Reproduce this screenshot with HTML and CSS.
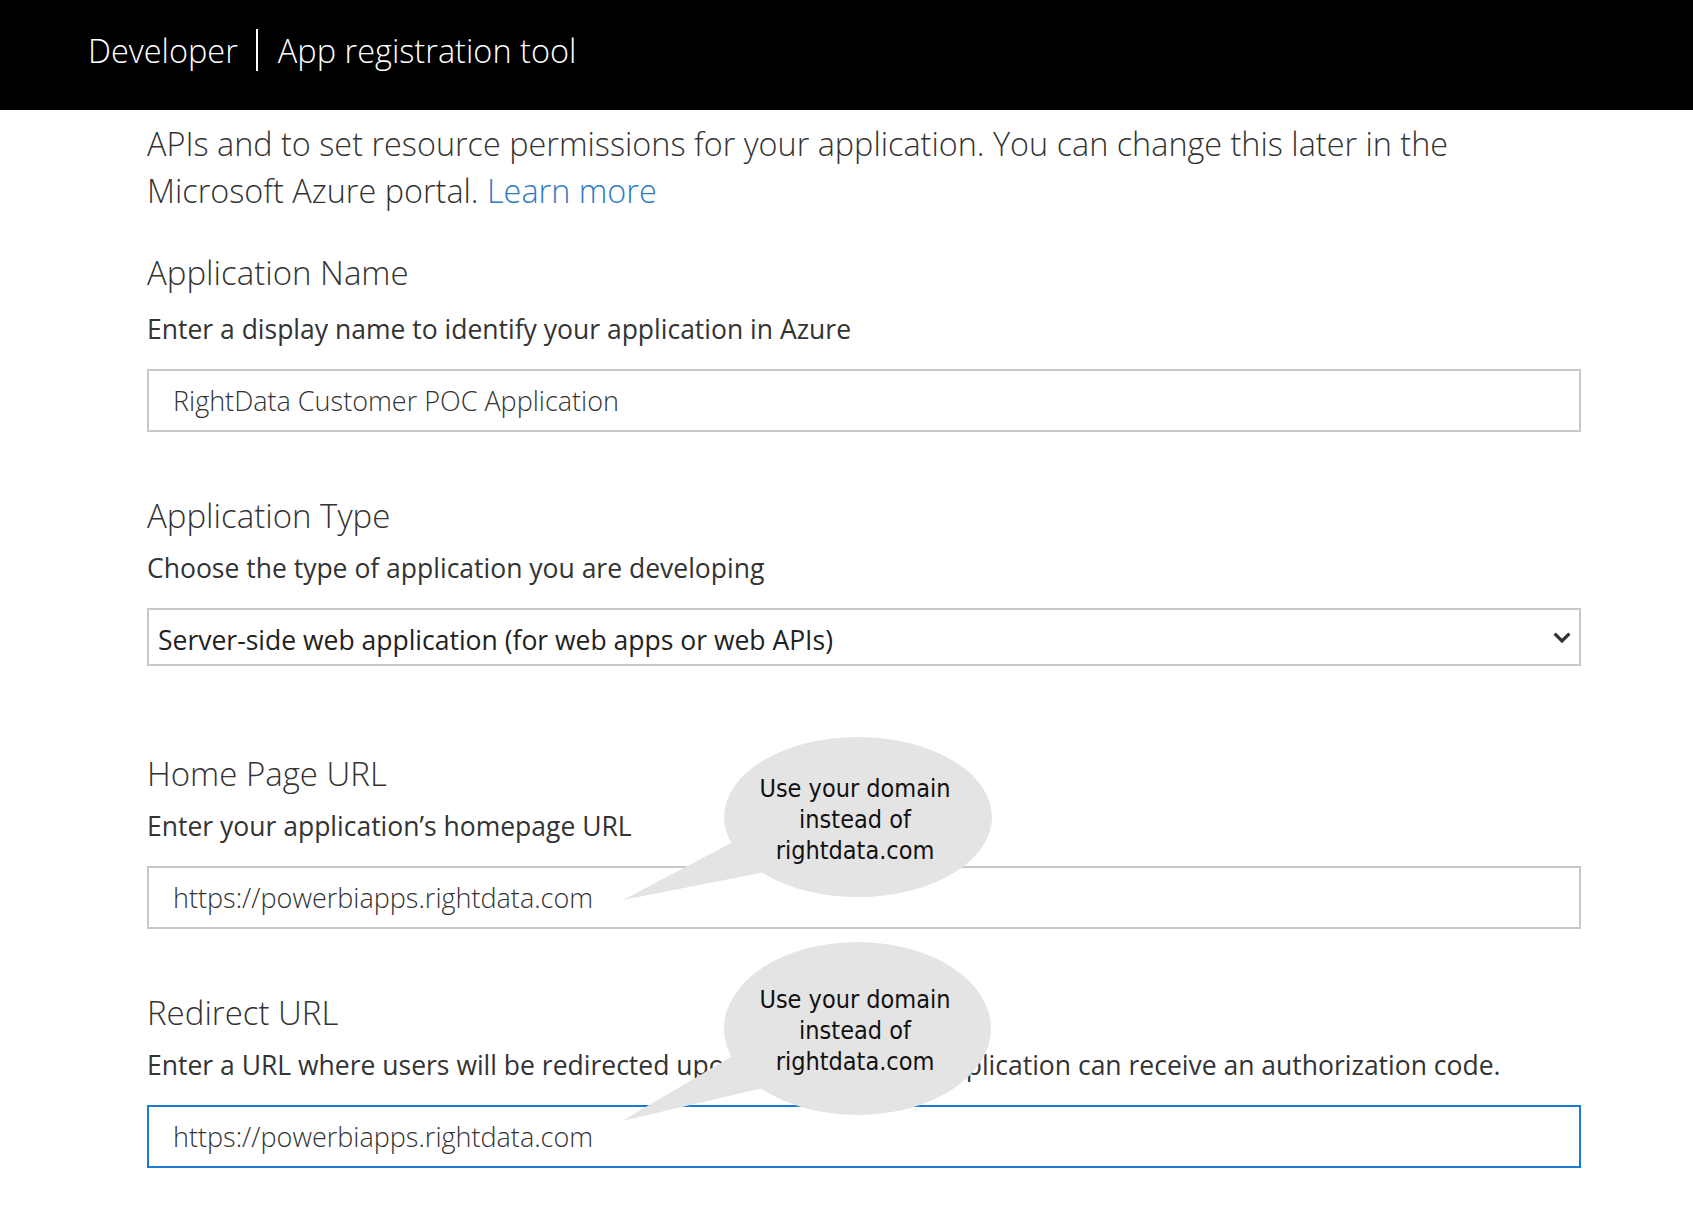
FILE: index.html
```html
<!DOCTYPE html>
<html lang="en">
<head>
    <meta charset="UTF-8">
    <meta name="viewport" content="width=device-width, initial-scale=1.0">
    <title>App registration tool</title>
    <link rel="stylesheet" href="styles.css">
</head>
<body>
    <header class="topbar">
        <span class="brand">Developer</span>
        <span class="divider"></span>
        <span class="tool">App registration tool</span>
    </header>

    <main class="content">
        <p class="intro">APIs and to set resource permissions for your application. You can change this later in the<br>
            Microsoft Azure portal. <a href="#">Learn more</a></p>

        <div class="field first">
            <h2>Application Name</h2>
            <p>Enter a display name to identify your application in Azure</p>
            <input type="text" class="text-input" value="RightData Customer POC Application">
        </div>

        <div class="field">
            <h2>Application Type</h2>
            <p>Choose the type of application you are developing</p>
            <div class="select">
                <span class="select-value">Server-side web application (for web apps or web APIs)</span>
                <svg class="chevron" width="18" height="11" viewBox="0 0 18 11">
                    <polyline points="1.6,1.6 9,9 16.4,1.6" fill="none" stroke="#333" stroke-width="3.2"/>
                </svg>
            </div>
        </div>

        <div class="field spaced">
            <h2>Home Page URL</h2>
            <p>Enter your application’s homepage URL</p>
            <input type="text" class="text-input" value="https://powerbiapps.rightdata.com">

            <!-- callout -->
            <svg class="bubble bubble-home" width="376" height="170" viewBox="0 0 376 170">
                <ellipse cx="238" cy="83" rx="134" ry="80" fill="#e4e4e4"/>
                <polygon points="3,166 132,98 170,133" fill="#e4e4e4"/>
                <text x="235" y="63">Use your domain</text>
                <text x="235" y="94">instead of</text>
                <text x="235" y="125">rightdata.com</text>
            </svg>
        </div>

        <div class="field">
            <h2>Redirect URL</h2>
            <p>Enter a URL where users will be redirected upon sign-in so your application can receive an authorization code.</p>
            <input type="text" class="text-input active" value="https://powerbiapps.rightdata.com">

            <svg class="bubble bubble-redirect" width="380" height="190" viewBox="0 0 380 190">
                <ellipse cx="239.5" cy="90.5" rx="133.5" ry="86.5" fill="#e4e4e4"/>
                <polygon points="4,183 140,103 175,143" fill="#e4e4e4"/>
                <text x="237" y="70">Use your domain</text>
                <text x="237" y="101">instead of</text>
                <text x="237" y="132">rightdata.com</text>
            </svg>
        </div>
    </main>
</body>
</html>
```

FILE: styles.css
```css
body {
    margin: 0;
    font-family: "Open Sans", "Noto Sans", sans-serif;
    color: #333;
    background: #fff;
}
.topbar {
    height: 110px;
    box-sizing: border-box;
    padding: 0 0 10px 88px;
    background: #000;
    color: #fff;
    display: flex;
    align-items: center;
    font-size: 32.5px;
    font-weight: 300;
}
.topbar .divider {
    width: 2px;
    height: 42px;
    background: #fff;
    margin: 0 20px 0 18px;
}
.content {
    padding: 0 112px 40px 147px;
}
.intro {
    margin: 10px 0 0;
    font-size: 32.4px;
    line-height: 47px;
    font-weight: 300;
}
.intro a {
    color: #2f7bc3;
    text-decoration: none;
}
.field {
    position: relative;
    margin-top: 64px;
}
.field.first {
    margin-top: 39px;
}
.field.first p {
    margin-top: 20px;
}
.field.spaced {
    margin-top: 88px;
}
.field h2 {
    margin: 0;
    font-size: 33px;
    line-height: 40px;
    font-weight: 300;
}
.field p {
    margin: 16px 0 24px;
    font-size: 26.5px;
    line-height: 32px;
}
.text-input {
    display: block;
    width: 100%;
    height: 63px;
    box-sizing: border-box;
    padding: 0 24px;
    border: 2px solid #c8c8c8;
    font-family: "Open Sans", "Noto Sans", sans-serif;
    font-size: 27px;
    font-weight: 300;
    color: #333;
    outline: none;
    background: #fff;
}
.text-input.active {
    border-color: #1b7ad6;
}
.select {
    display: flex;
    align-items: center;
    justify-content: space-between;
    height: 58px;
    box-sizing: border-box;
    padding: 0 8px 0 9px;
    border: 2px solid #c8c8c8;
    font-size: 26.5px;
    color: #222;
}
.select-value {
    padding-top: 6px;
}
.bubble {
    position: absolute;
}
.bubble text {
    font-family: "DejaVu Sans Condensed", "DejaVu Sans", sans-serif;
    font-stretch: condensed;
    font-size: 25px;
    fill: #111;
    text-anchor: middle;
}
.bubble-home {
    left: 473px;
    top: -20px;
}
.bubble-redirect {
    left: 471px;
    top: -55px;
}
```
